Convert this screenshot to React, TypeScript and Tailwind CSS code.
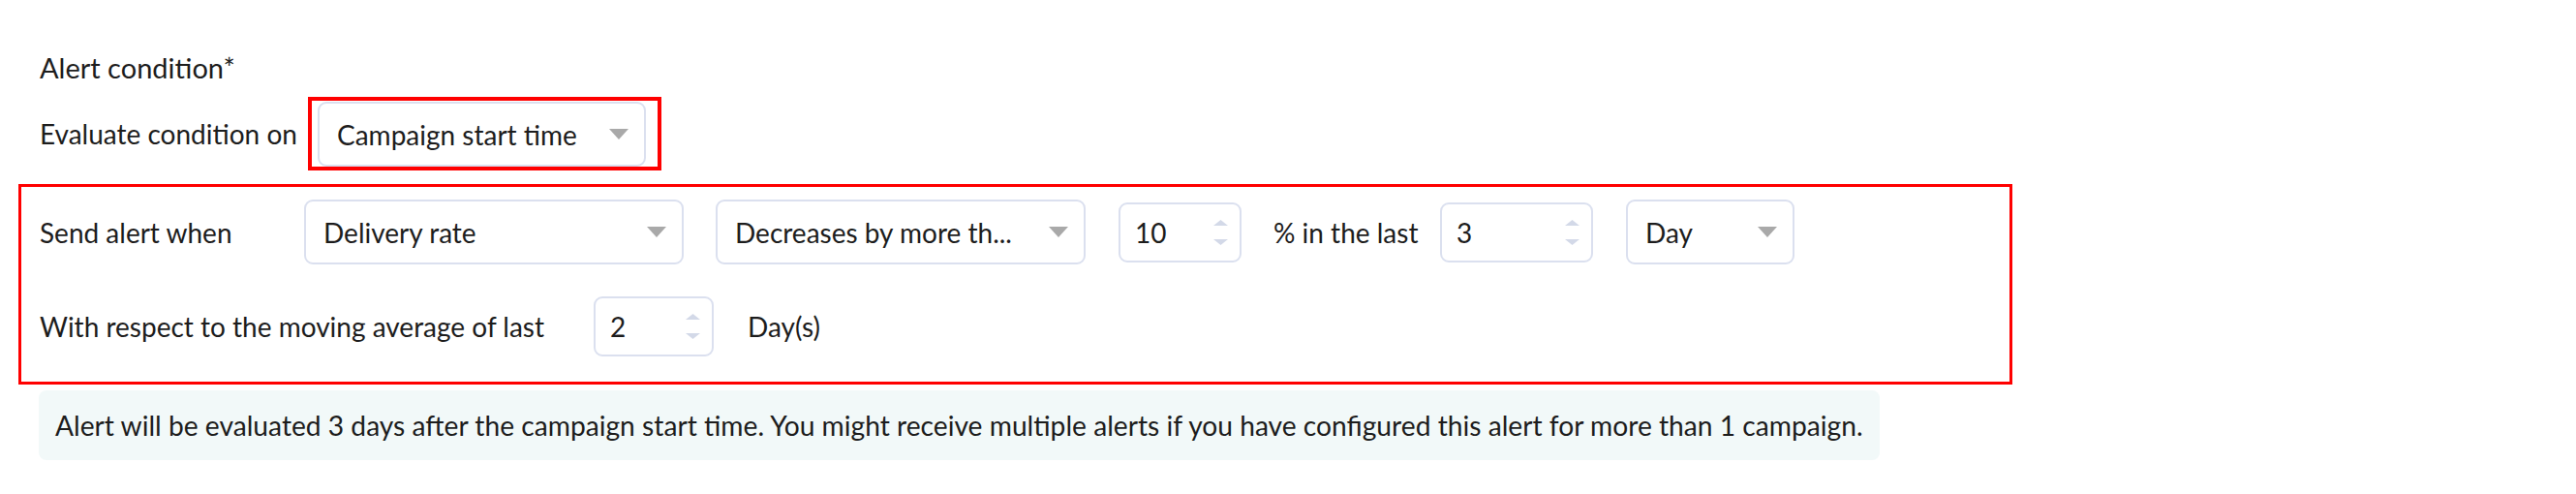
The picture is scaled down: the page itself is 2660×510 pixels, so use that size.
import React from 'react';

const Caret = () => (
  <svg width="20" height="11" viewBox="0 0 20 11" className="shrink-0">
    <path d="M0 0h20L10 11z" fill="#a9a9a9" />
  </svg>
);

const Spinner = () => (
  <svg width="15" height="26" viewBox="0 0 15 26" className="shrink-0">
    <path d="M7.5 0L15 6H0z" fill="#d3d9e8" />
    <path d="M0 20h15l-7.5 6z" fill="#d3d9e8" />
  </svg>
);

interface SelectProps {
  value: string;
  className?: string;
}

const Select: React.FC<SelectProps> = ({ value, className = '' }) => (
  <div
    className={`flex items-center justify-between h-[67px] pl-[18px] pr-[16px] border-2 border-[#dbe0ef] rounded-[9px] bg-white shrink-0 ${className}`}
  >
    <span className="whitespace-nowrap">{value}</span>
    <Caret />
  </div>
);

interface NumberInputProps {
  value: string;
  className?: string;
}

const NumberInput: React.FC<NumberInputProps> = ({ value, className = '' }) => (
  <div
    className={`flex items-center justify-between h-[62px] pl-[15px] pr-[12px] border-2 border-[#dbe0ef] rounded-[9px] bg-white shrink-0 ${className}`}
  >
    <span>{value}</span>
    <Spinner />
  </div>
);

export default function App() {
  return (
    <div className="min-h-screen bg-white font-['Lato',sans-serif] text-[28px] leading-[36px] text-[#1d1d1d]">
      <div className="pt-[52px] pl-[41px]">
        {/* Title */}
        <div className="mb-[12px] text-[29px]">Alert condition*</div>

        {/* Evaluate on */}
        <div className="flex items-center">
          <span className="w-[277px] shrink-0">Evaluate condition on</span>
          <div className="border-4 border-[#ff0000] pt-[1px] pl-[6px] pr-[12px]">
            <Select value="Campaign start time" className="w-[339px] h-[64px]" />
          </div>
        </div>
      </div>

      {/* Send alert block */}
      <div className="ml-[19px] mt-[14px] w-[2059px] border-[3px] border-[#ff0000] pl-[19px] pt-[13px] pb-[26px]">
        <div className="flex items-center h-[67px]">
          <span className="w-[240px] shrink-0">Send alert when</span>
          <Select value="Delivery rate" className="ml-[33px] w-[392px]" />
          <Select value="Decreases by more th..." className="ml-[33px] w-[382px]" />
          <NumberInput value="10" className="ml-[34px] w-[127px]" />
          <span className="ml-[33px] w-[147px] shrink-0 whitespace-nowrap">% in the last</span>
          <NumberInput value="3" className="ml-[25px] w-[158px]" />
          <Select value="Day" className="ml-[34px] w-[174px]" />
        </div>

        <div className="flex items-center mt-[33px] h-[62px]">
          <span className="w-[572px] shrink-0 whitespace-nowrap">With respect to the moving average of last</span>
          <NumberInput value="2" className="w-[124px]" />
          <span className="ml-[35px]">Day(s)</span>
        </div>
      </div>

      {/* Info note */}
      <div className="ml-[40px] mt-[6px] inline-flex items-center h-[72px] px-[17px] rounded-[8px] bg-[#f2f9f9] text-[28.2px] leading-[32px] whitespace-nowrap">
        Alert will be evaluated 3 days after the campaign start time. You might receive multiple alerts if you have configured this alert for more than 1 campaign.
      </div>
    </div>
  );
}
